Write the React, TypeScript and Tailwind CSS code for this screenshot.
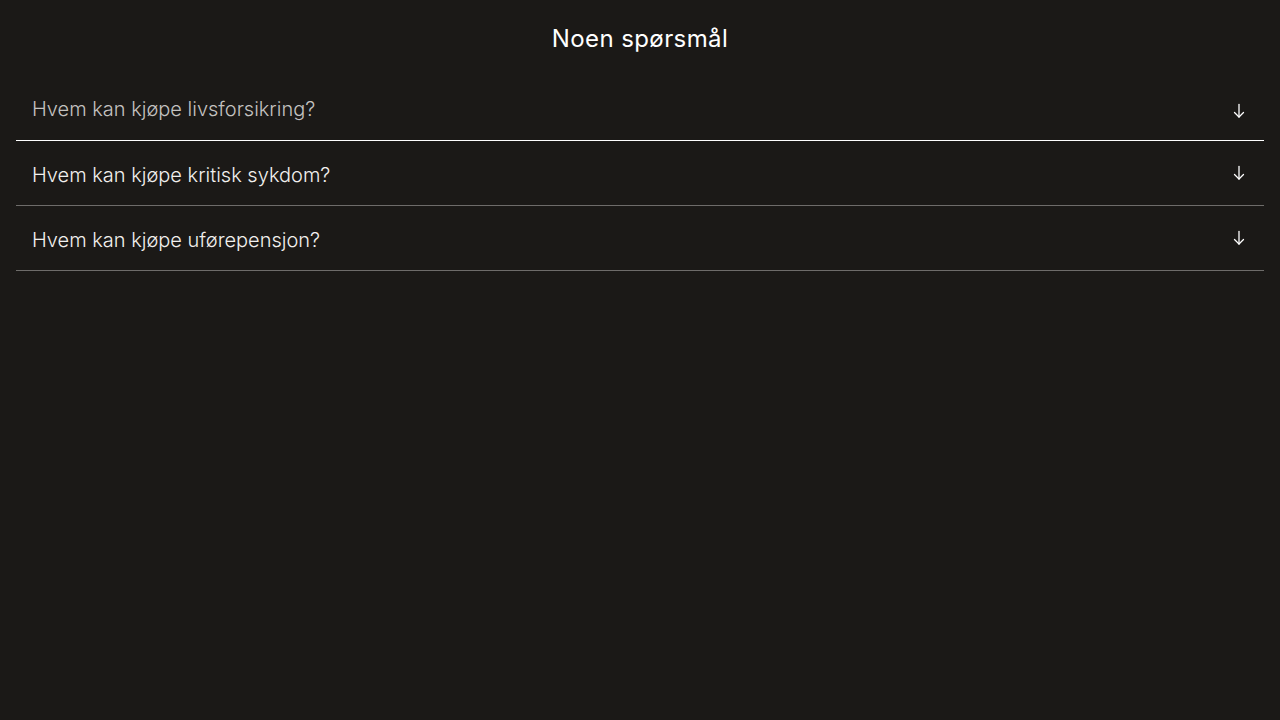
import React from "react";

const Arrow = () => (
  <svg width="14" height="16" viewBox="0 0 14 16" fill="none" stroke="currentColor" strokeWidth="1.3" strokeLinecap="round" strokeLinejoin="round">
    <path d="M7 1.5v12.5" />
    <path d="M2.5 9.5L7 14l4.5-4.5" />
  </svg>
);

const items = [
  { q: "Hvem kan kjøpe livsforsikring?", hover: true },
  { q: "Hvem kan kjøpe kritisk sykdom?", hover: false },
  { q: "Hvem kan kjøpe uførepensjon?", hover: false },
];

export default function App() {
  return (
    <div className="min-h-screen w-full bg-[#1b1917] text-white" style={{ fontFamily: "Inter, 'Noto Sans', sans-serif" }}>
      <div className="px-4 pt-[22px]">
        <h2 className="text-center text-[24px] leading-[34px] font-normal tracking-[0.4px] text-white">Noen spørsmål</h2>
        <div className="mt-[20px]">
          {items.map((it, i) => (
            <div
              key={i}
              className={`flex h-[65px] items-center justify-between border-b px-4 ${it.hover ? "border-white" : "border-[#6e6c6a]"}`}
            >
              <span className={`text-[20px] font-light tracking-[0px] ${it.hover ? "text-[#c4c2c0] mt-[1px]" : "text-[#f2f0ee] mt-[3px]"}`}>{it.q}</span>
              <span className={`mr-[2px] text-white ${it.hover ? "mt-[5px]" : ""}`}>
                <Arrow />
              </span>
            </div>
          ))}
        </div>
      </div>
    </div>
  );
}
